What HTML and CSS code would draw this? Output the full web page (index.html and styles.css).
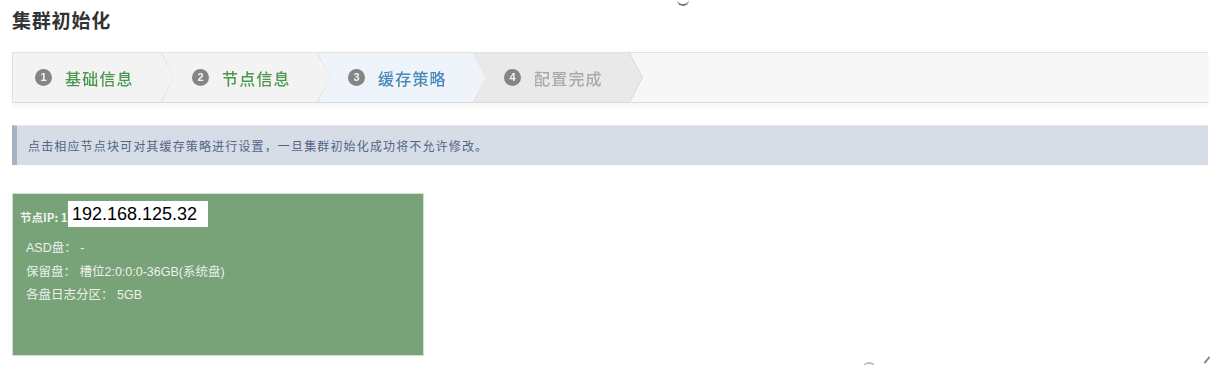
FILE: index.html
```html
<!DOCTYPE html>
<html lang="zh-CN">
<head>
<meta charset="utf-8">
<title>集群初始化</title>
<link rel="stylesheet" href="styles.css">
</head>
<body>
<div class="page">
  <h1 class="title">集群初始化</h1>
  <div class="steps">
    <div class="step step-done first"><div class="step-in"><span class="num">1</span><span class="label">基础信息</span></div></div>
    <div class="step step-done"><div class="step-in"><span class="num">2</span><span class="label">节点信息</span></div></div>
    <div class="step step-active"><div class="step-in"><span class="num">3</span><span class="label">缓存策略</span></div></div>
    <div class="step step-todo"><div class="step-in"><span class="num">4</span><span class="label">配置完成</span></div></div>
  </div>
  <div class="alert">点击相应节点块可对其缓存策略进行设置，一旦集群初始化成功将不允许修改。</div>
  <div class="node">
    <div class="node-head"><span class="node-label">节点IP: 1</span><span class="ip">192.168.125.32</span></div>
    <div class="node-line">ASD盘： -</div>
    <div class="node-line">保留盘： 槽位2:0:0:0-36GB(系统盘)</div>
    <div class="node-line">各盘日志分区： 5GB</div>
  </div>
</div>
<span class="mark mark-top"></span>
<span class="mark mark-bottom"></span>
<span class="mark mark-corner"></span>
</body>
</html>
```
FILE: styles.css
```css
html, body {
  margin: 0;
  padding: 0;
  background: #ffffff;
}
body {
  font-family: "Liberation Sans", "Noto Sans CJK SC", sans-serif;
  color: #333;
  width: 1215px;
  height: 365px;
  overflow: hidden;
  position: relative;
}
.page {
  padding: 8px 7px 0 12px;
}
.title {
  margin: 0;
  font-family: "Noto Sans CJK SC", sans-serif;
  font-size: 19px;
  font-weight: 700;
  line-height: 24px;
  color: #333;
  letter-spacing: 0.8px;
}
.steps {
  margin-top: 20px;
  height: 49px;
  display: flex;
  background: #f7f7f7;
  border-top: 1px solid #e2e2e2;
  border-bottom: 1px solid #dcdcdc;
  border-left: 1px solid #e2e2e2;
  box-shadow: 0 3px 4px rgba(0,0,0,0.04);
}
.step {
  flex: none;
  width: 168px;
  margin-left: -12px;
  filter: drop-shadow(1px 0 0 #d8d8d8);
}
.step.first {
  margin-left: 0;
  width: 161px;
}
.step-in {
  height: 100%;
  display: flex;
  align-items: center;
  padding-left: 30px;
  box-sizing: border-box;
  clip-path: polygon(0 0, calc(100% - 13px) 0, 100% 50%, calc(100% - 13px) 100%, 0 100%, 12px 50%);
}
.first .step-in {
  padding-left: 22px;
  clip-path: polygon(0 0, calc(100% - 13px) 0, 100% 50%, calc(100% - 13px) 100%, 0 100%);
}
.step-done .step-in { background: #f3f3f3; }
.step-active .step-in { background: #eef4fa; }
.step-todo .step-in { background: #e9e9e9; }
.num {
  width: 17px;
  height: 17px;
  border-radius: 50%;
  background: #858585;
  color: #f4f4f4;
  font-family: "Liberation Sans", sans-serif;
  font-size: 11px;
  font-weight: 700;
  line-height: 17px;
  text-align: center;
  flex: none;
}
.label {
  margin-left: 13px;
  font-family: "Noto Sans CJK SC", sans-serif;
  font-size: 16px;
  font-weight: 500;
  letter-spacing: 1.2px;
  line-height: 20px;
}
.step-done .label { color: #4c984f; }
.step-active .label { color: #4889b9; }
.step-todo .label { color: #a9a9a9; }

.alert {
  margin-top: 22px;
  height: 40px;
  box-sizing: border-box;
  background: #d6dde7;
  border-left: 5px solid #a3b3c1;
  border-top: 1px solid #e4e8ee;
  padding-left: 11px;
  display: flex;
  align-items: center;
  font-family: "Noto Sans CJK SC", sans-serif;
  font-size: 12px;
  letter-spacing: 1.15px;
  color: #536486;
}
.node {
  margin-top: 28px;
  width: 412px;
  height: 163px;
  box-sizing: border-box;
  background: #78a277;
  border: 1px solid #d6dcd6;
  padding: 7px 0 0 7px;
  color: #eef4ee;
}
.node-head {
  display: flex;
  align-items: center;
  height: 26px;
}
.node-label {
  font-family: "Noto Sans CJK SC", sans-serif;
  font-size: 11.5px;
  font-weight: 700;
  width: 51px;
  padding-top: 5px;
  overflow: hidden;
  white-space: nowrap;
}
.ip {
  position: relative;
  margin-left: -3px;
  background: #fff;
  color: #000;
  font-family: "Liberation Sans", sans-serif;
  font-size: 18px;
  line-height: 26px;
  padding: 0 11px 0 4px;
}
.node-line {
  margin-left: 6px;
  font-family: "Liberation Sans", "Noto Sans CJK SC", sans-serif;
  font-size: 12.5px;
  line-height: 23.5px;
  color: #e9f1e9;
}
.node-head + .node-line { margin-top: 10px; }

.mark {
  position: absolute;
  display: block;
}
.mark-top {
  left: 677px;
  top: -6px;
  width: 12px;
  height: 10px;
  border-bottom: 2px solid #777;
  border-radius: 0 0 8px 8px;
}
.mark-bottom {
  left: 862px;
  top: 362px;
  width: 14px;
  height: 8px;
  border-top: 2px solid #bbb;
  border-radius: 8px 8px 0 0;
}
.mark-corner {
  left: 1206px;
  top: 356px;
  width: 2px;
  height: 8px;
  background: #888;
  transform: rotate(40deg);
}
```
